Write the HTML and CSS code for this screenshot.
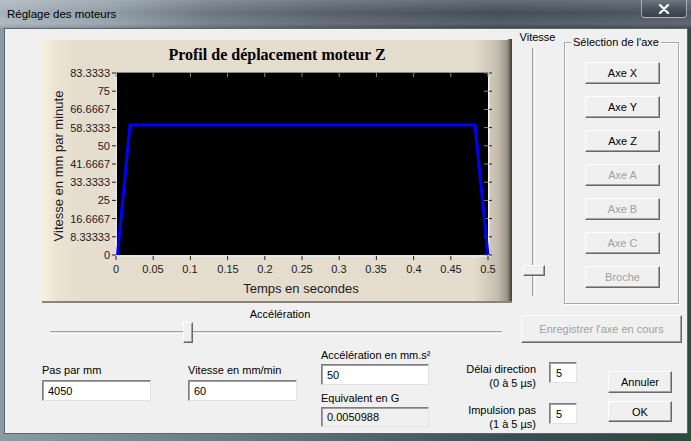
FILE: index.html
```html
<!DOCTYPE html>
<html lang="fr">
<head>
    <meta charset="UTF-8">
    <title>Réglage des moteurs</title>
    <link rel="stylesheet" href="styles.css">
</head>
<body>
    <div class="window">
        <div class="titlebar">
            <span class="title">Réglage des moteurs</span>
            <div class="close">
                <svg width="12" height="10" viewBox="0 0 12 10">
                    <path d="M2 1 L10 9 M10 1 L2 9" stroke="#f4f6f8" stroke-width="2.4" stroke-linecap="round"/>
                </svg>
            </div>
        </div>

        <div class="client">
            <div class="top">
                <!-- chart panel -->
                <div class="chart">
                    <svg width="470" height="264" viewBox="0 0 470 264">
                        <defs>
                            <linearGradient id="panelBg" x1="0" y1="0" x2="1" y2="0">
                                <stop offset="0" stop-color="#f9f2e2"/>
                                <stop offset="0.03" stop-color="#ece4d3"/>
                                <stop offset="0.08" stop-color="#e5ddcd"/>
                                <stop offset="0.92" stop-color="#e4dccc"/>
                                <stop offset="0.97" stop-color="#c4bcac"/>
                                <stop offset="0.99" stop-color="#9a9282"/>
                                <stop offset="1" stop-color="#3a3a3a"/>
                            </linearGradient>
                        </defs>
                        <rect x="0" y="0" width="470" height="264" fill="url(#panelBg)"/>
                        <rect x="0" y="0" width="466" height="1" fill="#f6efe0"/>
                        <rect x="0" y="262" width="470" height="2" fill="#8a8478"/>

                        <text class="chart-title" x="235" y="21" text-anchor="middle">Profil de déplacement moteur Z</text>

                        <!-- plot area -->
                        <rect x="74" y="34" width="372" height="182" fill="#000"/>
                        <rect x="74" y="33" width="372" height="1" fill="#8a8a8a"/>
                        <rect x="446" y="34" width="1.5" height="184" fill="#f4f4f4"/>
                        <rect x="73" y="34" width="2" height="184" fill="#e6e6e6"/>
                        <rect x="73" y="216" width="374" height="2" fill="#e6e6e6"/>

                        <g id="yticks" stroke="#222" stroke-width="1"></g>
                        <g id="xticks" stroke="#222" stroke-width="1"></g>

                        <g class="tick-lbl" text-anchor="end">
                            <text x="68" y="38">83.3333</text>
                            <text x="68" y="56">75</text>
                            <text x="68" y="74">66.6667</text>
                            <text x="68" y="93">58.3333</text>
                            <text x="68" y="111">50</text>
                            <text x="68" y="129">41.6667</text>
                            <text x="68" y="147">33.3333</text>
                            <text x="68" y="165">25</text>
                            <text x="68" y="184">16.6667</text>
                            <text x="68" y="202">8.33333</text>
                            <text x="68" y="220">0</text>
                        </g>
                        <g class="tick-lbl" text-anchor="middle">
                            <text x="74" y="234">0</text>
                            <text x="111" y="234">0.05</text>
                            <text x="148" y="234">0.1</text>
                            <text x="186" y="234">0.15</text>
                            <text x="223" y="234">0.2</text>
                            <text x="260" y="234">0.25</text>
                            <text x="297" y="234">0.3</text>
                            <text x="334" y="234">0.35</text>
                            <text x="372" y="234">0.4</text>
                            <text x="409" y="234">0.45</text>
                            <text x="446" y="234">0.5</text>
                        </g>

                        <text class="axis-title" x="259" y="254" text-anchor="middle">Temps en secondes</text>
                        <text class="axis-title" transform="translate(21,127) rotate(-90)" text-anchor="middle">Vitesse en mm par minute</text>

                        <polyline points="75.5,216 88,86 433,86 446,216" fill="none" stroke="#0000ff" stroke-width="3" stroke-linejoin="miter"/>
                    </svg>
                </div>

                <div class="vitesse">
                    <div class="vlabel">Vitesse</div>
                    <div class="vtrack"><div class="vthumb"></div></div>
                </div>

                <div class="axes">
                    <span class="axes-title">Sélection de l'axe</span>
                    <div class="axes-list">
                        <button class="btn axe">Axe X</button>
                        <button class="btn axe">Axe Y</button>
                        <button class="btn axe">Axe Z</button>
                        <button class="btn axe" disabled>Axe A</button>
                        <button class="btn axe" disabled>Axe B</button>
                        <button class="btn axe" disabled>Axe C</button>
                        <button class="btn axe" disabled>Broche</button>
                    </div>
                </div>
            </div>

            <div class="accel-row">
                <div class="accel">
                    <div class="alabel">Accélération</div>
                    <div class="htrack"><div class="hthumb"></div></div>
                </div>
                <button class="btn save" disabled>Enregistrer l'axe en cours</button>
            </div>

            <div class="fields">
                <div class="col col-pas">
                    <label class="lbl">Pas par mm</label>
                    <input type="text" class="field" value="4050">
                </div>
                <div class="col col-vit">
                    <label class="lbl">Vitesse en mm/min</label>
                    <input type="text" class="field" value="60">
                </div>
                <div class="col col-acc">
                    <label class="lbl">Accélération en mm.s²</label>
                    <input type="text" class="field" value="50">
                    <label class="lbl lbl-g">Equivalent en G</label>
                    <input type="text" class="field readonly" value="0.0050988" readonly>
                </div>
                <div class="col col-delay">
                    <div class="delay-row">
                        <div class="delay-text">Délai direction<br>(0 à 5 µs)</div>
                        <input type="text" class="field small" value="5">
                    </div>
                    <div class="delay-row">
                        <div class="delay-text">Impulsion pas<br>(1 à 5 µs)</div>
                        <input type="text" class="field small" value="5">
                    </div>
                </div>
                <div class="col col-btns">
                    <button class="btn act">Annuler</button>
                    <button class="btn act ok">OK</button>
                </div>
            </div>
        </div>
    </div>

    <script>
        // tick marks of the chart
        const ySteps = 10, xSteps = 10;
        const yticks = document.getElementById('yticks');
        const xticks = document.getElementById('xticks');
        let out = '';
        for (let i = 0; i <= ySteps; i++) {
            const y = 34 + i * 18.2;
            out += `<line x1="70" y1="${y}" x2="74" y2="${y}"/>`;
            out += `<line x1="442" y1="${y}" x2="446" y2="${y}" stroke="#888"/>`;
            out += `<line x1="447" y1="${y}" x2="450" y2="${y}"/>`;
        }
        yticks.innerHTML = out;
        out = '';
        for (let i = 0; i <= xSteps; i++) {
            const x = 74 + i * 37.2;
            out += `<line x1="${x}" y1="217" x2="${x}" y2="221"/>`;
            out += `<line x1="${x}" y1="34" x2="${x}" y2="38" stroke="#888"/>`;
        }
        xticks.innerHTML = out;
    </script>
</body>
</html>
```

FILE: styles.css
```css
body {
    margin: 0;
    font-family: "Liberation Sans", Arial, sans-serif;
    font-size: 11px;
    color: #000;
}

.window {
    width: 691px;
    height: 441px;
    overflow: hidden;
    background: linear-gradient(to right, #8e9aa3 0, #6a7680 35%, #3f4b54 75%, #2e4a3c 100%);
}

.titlebar {
    height: 28px;
    display: flex;
    align-items: center;
    padding-left: 7px;
    box-sizing: border-box;
    background:
        linear-gradient(to bottom, rgba(255,255,255,0.18) 0, rgba(255,255,255,0) 45%, rgba(255,255,255,0.1) 85%, rgba(0,0,0,0.1) 100%),
        linear-gradient(to right, #a7b3bb 0, #909ca6 16%, #6c7782 30%, #56606b 48%, #444e59 72%, #4e5863 100%);
}

.title {
    font-size: 11.5px;
    color: #000;
}

.close {
    margin-left: auto;
    margin-right: 4px;
    align-self: flex-start;
    width: 46px;
    height: 18px;
    box-sizing: border-box;
    border: 1px solid rgba(230,236,240,0.55);
    border-top: none;
    border-radius: 0 0 4px 4px;
    background: linear-gradient(to bottom, #6c7782 0, #4a545e 50%, #353f48 100%);
    display: flex;
    align-items: center;
    justify-content: center;
}

.client {
    margin-left: 4px;
    width: 684px;
    height: 406px;
    box-sizing: border-box;
    border: 1px solid #5c666e;
    background: #f0f0f0;
}

/* top part: chart, speed slider, axis group */
.top {
    display: flex;
    align-items: flex-start;
    height: 276px;
}

.chart {
    margin-left: 37px;
    margin-top: 10px;
    width: 470px;
    height: 264px;
}

.chart svg {
    display: block;
}

.chart-title {
    font-family: "Liberation Serif", "Times New Roman", serif;
    font-weight: bold;
    font-size: 16px;
    fill: #000;
}

.tick-lbl text {
    font-family: "Liberation Sans", Arial, sans-serif;
    font-size: 11px;
    fill: #1e1a24;
}

.axis-title {
    font-family: "Liberation Sans", Arial, sans-serif;
    font-size: 13px;
    fill: #1e1a24;
}

.vitesse {
    margin-left: 6px;
    width: 38px;
    padding-top: 2px;
}

.vlabel {
    line-height: 13px;
    text-align: center;
    margin-left: 1px;
}

.vtrack {
    position: relative;
    margin-top: 4px;
    margin-left: 14px;
    width: 1px;
    height: 248px;
    background: #e4e4e4;
    border-left: 1px solid #a0a0a0;
    border-right: 1px solid #fff;
}

.vthumb {
    position: absolute;
    top: 217px;
    left: -10px;
    width: 22px;
    height: 11px;
    box-sizing: border-box;
    background: #f0f0f0;
    border: 1px solid;
    border-color: #fff #696969 #696969 #fff;
    box-shadow: inset -1px -1px 0 #a0a0a0;
}

.axes {
    margin-left: 8px;
    margin-top: 13px;
    width: 115px;
    height: 262px;
    box-sizing: border-box;
    border: 1px solid #a8a8a8;
    box-shadow: inset 1px 1px 0 #fff, 1px 1px 0 #fff;
}

.axes-title {
    display: table;
    margin: -7px 0 0 6px;
    padding: 0 2px;
    line-height: 13px;
    background: #f0f0f0;
}

.axes-list {
    display: flex;
    flex-direction: column;
    gap: 12px;
    margin-top: 13px;
    padding-left: 20px;
}

/* classic buttons */
.btn {
    font-family: "Liberation Sans", Arial, sans-serif;
    font-size: 11px;
    color: #000;
    background: #f0f0f0;
    border: 1px solid;
    border-color: #fff #696969 #696969 #fff;
    box-shadow: inset -1px -1px 0 #a0a0a0;
    padding: 0;
    margin: 0;
}

.btn:disabled {
    color: #a0a0a0;
}

.axe {
    width: 75px;
    height: 22px;
}

.accel-row {
    display: flex;
    align-items: flex-start;
    height: 44px;
}

.accel {
    margin-left: 45px;
    width: 452px;
    padding-top: 3px;
}

.alabel {
    line-height: 13px;
    text-align: center;
    padding-left: 8px;
}

.htrack {
    position: relative;
    margin-top: 10px;
    height: 1px;
    background: #e4e4e4;
    border-top: 1px solid #a0a0a0;
    border-bottom: 1px solid #fff;
}

.hthumb {
    position: absolute;
    top: -10px;
    left: 133px;
    width: 10px;
    height: 21px;
    box-sizing: border-box;
    background: #f0f0f0;
    border: 1px solid;
    border-color: #fff #696969 #696969 #fff;
    box-shadow: inset -1px -1px 0 #a0a0a0;
}

.save {
    margin-left: 19px;
    margin-top: 10px;
    width: 161px;
    height: 28px;
}

/* bottom fields */
.fields {
    display: flex;
    align-items: flex-start;
}

.col {
    display: flex;
    flex-direction: column;
}

.lbl {
    line-height: 13px;
    white-space: nowrap;
}

.field {
    font-family: "Liberation Sans", Arial, sans-serif;
    font-size: 11px;
    height: 21px;
    box-sizing: border-box;
    margin: 0;
    padding: 0 0 0 5px;
    border: 1px solid;
    border-color: #7f7f7f #e3e3e3 #e3e3e3 #7f7f7f;
    box-shadow: inset 1px 1px 0 #a0a0a0;
    background: #fff;
    color: #000;
    outline: none;
}

.field.readonly {
    background: #f0f0f0;
    height: 20px;
}

.col-pas {
    margin-left: 37px;
    margin-top: 15px;
    width: 109px;
}

.col-pas .field,
.col-vit .field {
    margin-top: 3px;
}

.col-vit {
    margin-left: 37px;
    margin-top: 15px;
    width: 109px;
}

.col-acc {
    margin-left: 24px;
    width: 108px;
}

.col-acc .field {
    margin-top: 2px;
}

.col-acc .lbl-g {
    margin-top: 7px;
}

.col-delay {
    width: 148px;
    margin-top: 13px;
    gap: 13px;
}

.delay-row {
    display: flex;
    justify-content: flex-end;
    align-items: flex-start;
}

.delay-text {
    text-align: right;
    line-height: 14px;
    margin-right: 13px;
    white-space: nowrap;
}

.field.small {
    width: 28px;
    padding-left: 6px;
}

.col-btns {
    margin-left: 31px;
    margin-top: 22px;
    gap: 8px;
}

.act {
    width: 64px;
    height: 22px;
}

.act.ok {
    height: 21px;
}
```
